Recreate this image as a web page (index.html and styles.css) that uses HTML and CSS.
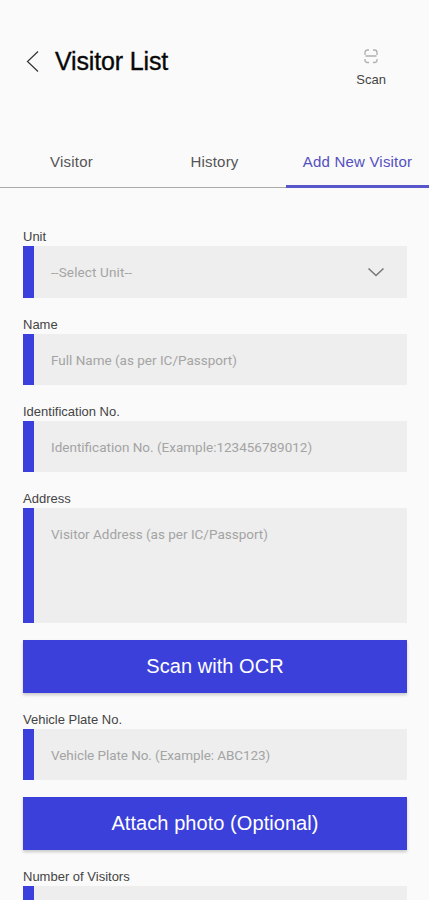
FILE: index.html
```
<!DOCTYPE html>
<html lang="en">
<head>
<meta charset="utf-8">
<title>Visitor List</title>
<link rel="stylesheet" href="styles.css">
</head>
<body>
<header class="header">
  <svg class="back" width="14" height="22" viewBox="0 0 14 22"><path d="M12 1.500 1.500 11.500l10.500 10"/></svg>
  <h1 class="title"><span>Visitor List</span></h1>
  <div class="scan">
    <svg width="16" height="16" viewBox="0 0 16 16"><path d="M2 7V4.500Q2 2 4.500 2H6M10 2h1.500Q14 2 14 4.500V7M2 11v1Q2 14.500 4.500 14.500H6M10 14.500h1.500Q14 14.500 14 12V11M2.500 8h11"/></svg>
    <span>Scan</span>
  </div>
</header>
<nav class="tabs">
  <div class="tab"><span>Visitor</span></div>
  <div class="tab"><span>History</span></div>
  <div class="tab active"><span>Add New Visitor</span></div>
</nav>
<main class="form">
  <div class="label"><span>Unit</span></div>
  <div class="field select"><span class="prompt">--Select Unit--</span>
    <svg width="18" height="10" viewBox="0 0 18 10"><path d="M1.500 1.500 9 8.500l7.500-7"/></svg>
  </div>
  <div class="label"><span>Name</span></div>
  <div class="field"><span>Full Name (as per IC/Passport)</span></div>
  <div class="label"><span>Identification No.</span></div>
  <div class="field"><span>Identification No. (Example:123456789012)</span></div>
  <div class="label"><span>Address</span></div>
  <div class="field area"><span>Visitor Address (as per IC/Passport)</span></div>
  <div class="button"><span>Scan with OCR</span></div>
  <div class="label"><span>Vehicle Plate No.</span></div>
  <div class="field"><span class="plate">Vehicle Plate No. (Example: ABC123)</span></div>
  <div class="button"><span>Attach photo (Optional)</span></div>
  <div class="label"><span>Number of Visitors</span></div>
  <div class="field last"></div>
</main>
</body>
</html>
```
FILE: styles.css
```
* { box-sizing: border-box; }
html, body { height: 900px; overflow: hidden; }
body { margin: 0; background: #fafafa; color: #444; font-family: "Liberation Sans", Arial, sans-serif; }
svg { display: block; fill: none; }
span { white-space: nowrap; }
.header { display: flex; height: 136px; padding: 48px 43px 0 26px; align-items: flex-start; }
.back { margin-top: 2px; stroke: #333; stroke-width: 1.2; }
.title { margin: 0 0 0 15px; font-size: 25px; line-height: 26px; font-weight: 400; color: #080808; letter-spacing: -0.15px; -webkit-text-stroke: 0.35px #080808; }
.scan { margin-left: auto; display: flex; flex-direction: column; align-items: center; font-size: 13px; line-height: 16px; }
.scan svg { margin: 0 0 8px; stroke: #b0b0b0; stroke-width: 1.3; }
.tabs { display: grid; grid-template-columns: repeat(3, 1fr); height: 52px; font-size: 15px; }
.tab { display: flex; justify-content: center; padding-top: 17px; line-height: 18px; border-bottom: 1.500px solid #aaa; color: #555; }
.tab span { letter-spacing: 0.2px; }
.tab.active { color: #5450c0; border-bottom: 3px solid #5856c9; }
.form { padding: 36px 22px 0 23px; }
.label { height: 22px; padding-top: 5px; font-size: 13px; line-height: 16px; }
.field { display: flex; align-items: center; height: 51px; margin-bottom: 14px; padding: 1px 0 0 17px; border-left: 11px solid #3b3fdb; background: #eee; color: #a4a4a4; font: 13.500px/16px Roboto, sans-serif; }
.prompt { letter-spacing: 0.13px; }
.plate { letter-spacing: -0.07px; }
.select { height: 52px; justify-content: space-between; padding-top: 0; padding-bottom: 1px; padding-right: 22px; }
.select svg { stroke: #777; stroke-width: 1.5; }
.area { height: 115px; align-items: flex-start; padding-top: 18px; margin-bottom: 17px; }
.last { height: 14px; margin: 0; }
.button { display: flex; align-items: center; justify-content: center; height: 53px; margin-bottom: 14px; background: #3b40da; color: #fff; font-size: 20px; letter-spacing: 0.06px; box-shadow: 0 2px 3px rgba(0,0,0,.2); }
.field + .button { margin-top: 17px; }
```
